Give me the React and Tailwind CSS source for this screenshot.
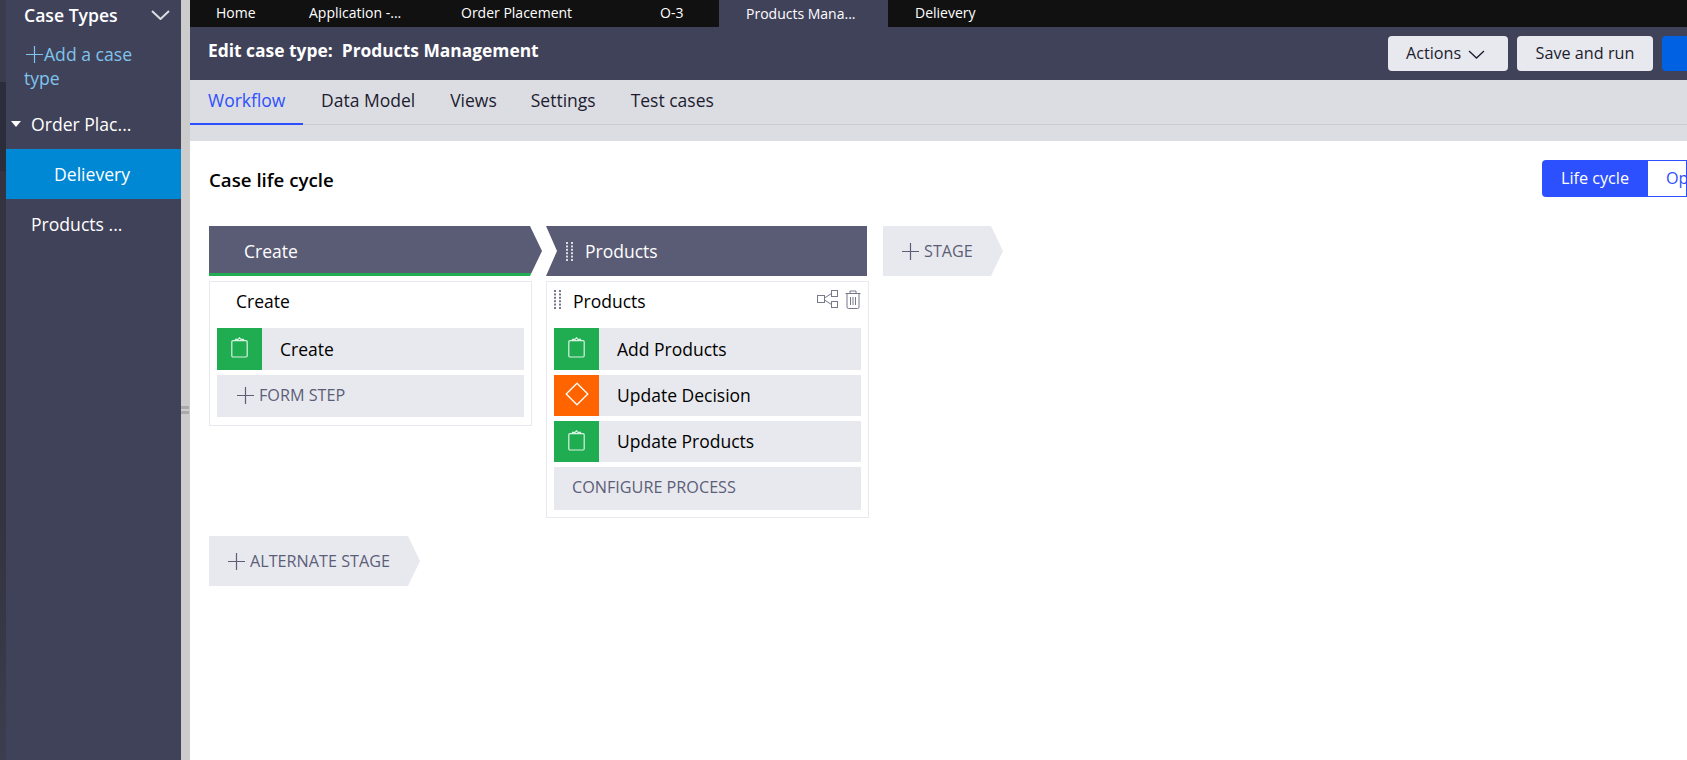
const fontStack = "font-['Open_Sans','Noto_Sans',sans-serif]";

function PlusIcon() {
  return (
    <svg width="17" height="17" viewBox="0 0 17 17" fill="none" stroke="currentColor" strokeWidth="1.2" className="shrink-0">
      <path d="M8.5 0v17M0 8.5h17" />
    </svg>
  );
}

function Chevron({ width, height, strokeWidth, className }) {
  return (
    <svg width={width} height={height} viewBox={`0 0 ${width} ${height}`} fill="none" stroke="currentColor" strokeWidth={strokeWidth} className={className}>
      <path d={`M1 1l${width / 2 - 1} ${height - 2}L${width - 1} 1`} />
    </svg>
  );
}

function ClipboardIcon() {
  return (
    <svg width="17" height="21" viewBox="0 0 17 21" fill="none" stroke="#d9f2e1" strokeWidth="1.2">
      <path d="M2 3.6h13a1.2 1.2 0 0 1 1.2 1.2v14a1.2 1.2 0 0 1-1.2 1.2H2a1.2 1.2 0 0 1-1.2-1.2v-14A1.2 1.2 0 0 1 2 3.6z" />
      <path d="M4.5 3.6V2.4h2.5L8.5 0.8 10 2.4h2.5v1.2" />
    </svg>
  );
}

function DiamondIcon() {
  return (
    <svg width="24" height="24" viewBox="0 0 24 24" fill="none" stroke="#fff" strokeWidth="1.3" strokeLinejoin="round">
      <path d="M12 1.2L22.8 12 12 22.8 1.2 12z" />
    </svg>
  );
}

function GripDots({ color }) {
  return (
    <svg width="7" height="19" viewBox="0 0 7 19" fill={color} className="shrink-0">
      {[0, 1, 2, 3, 4, 5].map((i) => (
        <g key={i}>
          <rect x="0" y={i * 3.4} width="2" height="2" />
          <rect x="5" y={i * 3.4} width="2" height="2" />
        </g>
      ))}
    </svg>
  );
}

function FlowIcon() {
  return (
    <svg width="21" height="18" viewBox="0 0 21 18" fill="none" stroke="#77788a" strokeWidth="1">
      <rect x="0.5" y="5.5" width="7" height="7" />
      <rect x="14.5" y="0.5" width="6" height="6" />
      <rect x="14.5" y="11.5" width="6" height="6" />
      <path d="M7.5 8L14.5 3.5M7.5 10l7 4.5" />
    </svg>
  );
}

function TrashIcon() {
  return (
    <svg width="16" height="19" viewBox="0 0 16 19" fill="none" stroke="#77788a" strokeWidth="1">
      <path d="M0.5 3.5h15M5 3.5V1h6v2.5" />
      <path d="M2 3.5V17a1.5 1.5 0 0 0 1.5 1.5h9A1.5 1.5 0 0 0 14 17V3.5" />
      <path d="M5.5 7v8M8 7v8M10.5 7v8" />
    </svg>
  );
}

function StepRow({ label, kind, height }) {
  const isDecision = kind === "decision";
  return (
    <div className={`flex bg-[#e8e9ee] ${height}`}>
      <div className={`w-[45px] shrink-0 flex justify-center ${isDecision ? "bg-[#ff6400] pt-[7px]" : "bg-[#20ad52] pt-[9px]"}`}>
        {isDecision ? <DiamondIcon /> : <ClipboardIcon />}
      </div>
      <span className="pl-[18px] self-center text-[17.5px] text-black">{label}</span>
    </div>
  );
}

function AddRow({ label, plus }) {
  return (
    <div className={`flex items-center gap-[5px] bg-[#e8e9ee] text-[#5c5e78] text-[16.2px] pb-[2px] ${plus ? "h-[42px] pl-5" : "h-[43px] pl-[18px]"}`}>
      {plus && <PlusIcon />}
      <span>{label}</span>
    </div>
  );
}

function AddStage({ label, width }) {
  return (
    <div className={`h-[50px] ${width} pl-[19px] flex items-center gap-[5px] bg-[#e8e9ee] text-[#5c5e78] text-[16.2px] [clip-path:polygon(0_0,calc(100%-12px)_0,100%_50%,calc(100%-12px)_100%,0_100%)]`}>
      <PlusIcon />
      <span>{label}</span>
    </div>
  );
}

export default function App() {
  const topTabs = [
    { label: "Home", cls: "w-[90px] pl-[26px] leading-[25px]" },
    { label: "Application -...", cls: "w-[154px] pl-[29px] leading-[26px]" },
    { label: "Order Placement", cls: "w-[195px] pl-[27px] leading-[26px]" },
    { label: "O-3", cls: "w-[90px] pl-[31px] leading-[26px]" },
  ];

  return (
    <div className={`flex h-[760px] w-[1687px] overflow-hidden bg-white ${fontStack}`}>
      <div className="w-[6px] shrink-0 flex flex-col bg-[#33344a]">
        <div className="h-[82px] bg-[#3a3b4d]" />
        <div className="h-[89px] bg-[#2c2d3c]" />
        <div className="flex-1 bg-[linear-gradient(to_bottom,#33343f_60%,#3c3d4f)]" />
      </div>

      {/* left nav */}
      <div className="w-[175px] shrink-0 bg-[#40425a] text-white text-[17.6px]">
        <div className="flex items-center justify-between h-[30px] pl-[18px] pr-[11px]">
          <span className="font-semibold">Case Types</span>
          <Chevron width={19} height={10} strokeWidth={2} className="text-[#dcdde2] -mt-[1px]" />
        </div>
        <div className="pl-[18px] pt-[12px] pr-[20px] text-[#7fc4ec] leading-[24px]">
          <span className="inline-block ml-[2px] mr-[1px] align-[-2px]">
            <PlusIcon />
          </span>
          Add a case type
        </div>
        <div className="flex items-center h-[50px] mt-[9px] pl-[5px]">
          <span className="w-0 h-0 border-x-[5.5px] border-x-transparent border-t-[6px] border-t-white mr-[10px]" />
          Order Plac...
        </div>
        <div className="flex items-center h-[50px] pl-[48px] bg-[#0088d4]">Delievery</div>
        <div className="flex items-center h-[50px] pl-[25px]">Products ...</div>
      </div>

      {/* splitter */}
      <div className="w-[9px] shrink-0 bg-[#cccccc] pt-[406px] flex flex-col gap-[2px]">
        <div className="w-[8px] h-[3px] bg-[#aaaaaa]" />
        <div className="w-[8px] h-[3px] bg-[#aaaaaa]" />
      </div>

      <div className="flex-1 min-w-0 flex flex-col">
        <div className="h-[27px] shrink-0 flex bg-[#111111] text-white text-sm">
          {topTabs.map((tab) => (
            <div key={tab.label} className={tab.cls}>{tab.label}</div>
          ))}
          <div className="w-[169px] pl-[27px] bg-[#40425a] leading-[28px]">Products Mana...</div>
          <div className="pl-[27px] leading-[26px]">Delievery</div>
        </div>

        <div className="h-[53px] shrink-0 flex items-center justify-between bg-[#40425a]">
          <span className="pl-[18px] pb-[7px] text-[17.4px] font-bold text-white whitespace-pre">Edit case type:  Products Management</span>
          <div className="flex gap-[9px] -mr-[25px]">
            <button className="w-[120px] h-[35px] flex items-center pl-[18px] pb-[1px] gap-[7px] rounded bg-[#e8e9ee] text-[#1c1c30] text-[16.2px]">
              Actions
              <Chevron width={17} height={9} strokeWidth={1.3} className="mt-[2px]" />
            </button>
            <button className="w-[136px] h-[35px] pb-[1px] rounded bg-[#e8e9ee] text-[#1c1c30] text-[16.2px]">Save and run</button>
            <button className="w-[50px] h-[35px] rounded bg-[#0062e3]" />
          </div>
        </div>

        <div className="h-[61px] shrink-0 bg-[#dcdde2]">
          <div className="flex h-[45px] border-b border-[#cccccc] text-[17.5px] text-[#1c1c30]">
            <div className="w-[113px] h-[45px] pl-[18px] pb-[3px] flex items-center border-b-2 border-[#2d50ff] text-[#2d50ff]">Workflow</div>
            <div className="pl-[18px] pb-[3px] flex items-center">Data Model</div>
            <div className="pl-[35px] pb-[3px] flex items-center">Views</div>
            <div className="pl-[34px] pb-[3px] flex items-center">Settings</div>
            <div className="pl-[35px] pb-[3px] flex items-center">Test cases</div>
          </div>
        </div>

        <div className="flex-1 pl-[19px] overflow-hidden">
          <div className="flex items-center justify-between h-[37px] mt-[19px]">
            <span className="pt-[3px] text-[18.7px] font-semibold text-black">Case life cycle</span>
            <div className="flex h-[37px] shrink-0">
              <div className="w-[106px] flex items-center justify-center rounded-l bg-[#2d50ff] text-white text-[16.2px]">Life cycle</div>
              <div className="w-[39px] pl-[18px] flex items-center border border-l-0 border-[#2d50ff] bg-white text-[#2d50ff] text-[16.2px] overflow-hidden">Op</div>
            </div>
          </div>

          <div className="flex mt-[29px]">
            <div className="w-[337px] shrink-0">
              <div className="w-[333px] h-[50px] flex items-center pl-[35px] text-white text-[17.5px] bg-[linear-gradient(to_top,#20ad52_3px,#5a5b75_3px)] [clip-path:polygon(0_0,321px_0,100%_50%,321px_100%,0_100%)]">Create</div>
              <div className="w-[323px] h-[145px] mt-[5px] border border-[#e8e9ee] px-[7px]">
                <div className="h-[46px] flex items-center pl-[19px] pb-[7px] text-[17.5px] text-black">Create</div>
                <div className="flex flex-col gap-[5px]">
                  <StepRow label="Create" kind="form" height="h-[42px]" />
                  <AddRow label="FORM STEP" plus />
                </div>
              </div>
            </div>

            <div className="w-[337px] shrink-0">
              <div className="w-[321px] h-[50px] flex items-center gap-[12px] pl-[20px] text-white text-[17.5px] bg-[#5a5b75] [clip-path:polygon(0_0,100%_0,100%_100%,0_100%,11px_50%)]">
                <GripDots color="#dcdde2" />
                Products
              </div>
              <div className="w-[323px] h-[237px] mt-[5px] border border-[#e8e9ee] px-[7px]">
                <div className="h-[46px] flex items-start justify-between pt-[8px]">
                  <div className="flex items-start gap-[12px]">
                    <GripDots color="#77788a" />
                    <span className="text-[17.5px] text-black leading-[23px]">Products</span>
                  </div>
                  <div className="flex gap-[7px] items-start">
                    <FlowIcon />
                    <TrashIcon />
                  </div>
                </div>
                <div className="flex flex-col gap-[5px]">
                  <StepRow label="Add Products" kind="form" height="h-[42px]" />
                  <StepRow label="Update Decision" kind="decision" height="h-[41px]" />
                  <StepRow label="Update Products" kind="form" height="h-[41px]" />
                  <AddRow label="CONFIGURE PROCESS" />
                </div>
              </div>
            </div>

            <AddStage label="STAGE" width="w-[120px]" />
          </div>

          <div className="mt-[18px]">
            <AddStage label="ALTERNATE STAGE" width="w-[211px]" />
          </div>
        </div>
      </div>
    </div>
  );
}
